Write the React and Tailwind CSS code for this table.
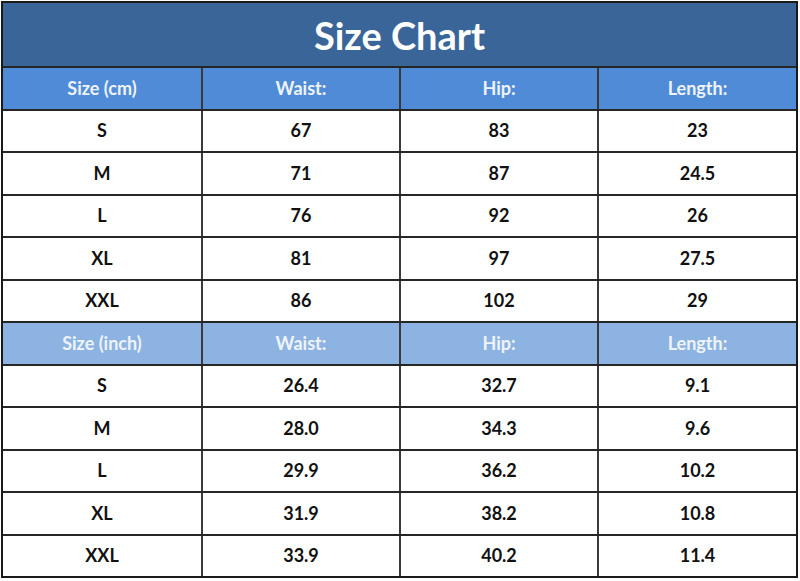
import React from "react";

const cm = [
  ["S", "67", "83", "23"],
  ["M", "71", "87", "24.5"],
  ["L", "76", "92", "26"],
  ["XL", "81", "97", "27.5"],
  ["XXL", "86", "102", "29"],
];
const inch = [
  ["S", "26.4", "32.7", "9.1"],
  ["M", "28.0", "34.3", "9.6"],
  ["L", "29.9", "36.2", "10.2"],
  ["XL", "31.9", "38.2", "10.8"],
  ["XXL", "33.9", "40.2", "11.4"],
];

function Row({ cells, header, bg }) {
  return (
    <div className={`grid grid-cols-[198px_198px_198px_1fr] h-[42.5px] border-t-2 border-[#262626] ${bg || "bg-white"}`}>
      {cells.map((c, i) => (
        <div
          key={i}
          className={`flex items-center justify-center text-[18px] font-bold ${i > 0 ? "border-l-2 border-[#3a3a3a]" : ""} ${header ? "text-[#eef3fa]" : "text-[#111]"}`}
        >
          {c}
        </div>
      ))}
    </div>
  );
}

export default function App() {
  return (
    <div className="w-[800px] h-[581px] bg-white pt-[1px] pl-[1px]" style={{ fontFamily: "Lato, 'Open Sans', sans-serif" }}>
      <div className="w-[797px] border-2 border-[#1a1a1a] flex flex-col">
        <div className="h-[63px] bg-[#3a6598] flex items-center justify-center text-white text-[38px] font-bold pt-[1px]">
          Size Chart
        </div>
        <Row cells={["Size (cm)", "Waist:", "Hip:", "Length:"]} header bg="bg-[#4f8bd6]" />
        {cm.map((r, i) => (
          <Row key={"c" + i} cells={r} />
        ))}
        <Row cells={["Size (inch)", "Waist:", "Hip:", "Length:"]} header bg="bg-[#8cb3e1]" />
        {inch.map((r, i) => (
          <Row key={"i" + i} cells={r} />
        ))}
      </div>
    </div>
  );
}
